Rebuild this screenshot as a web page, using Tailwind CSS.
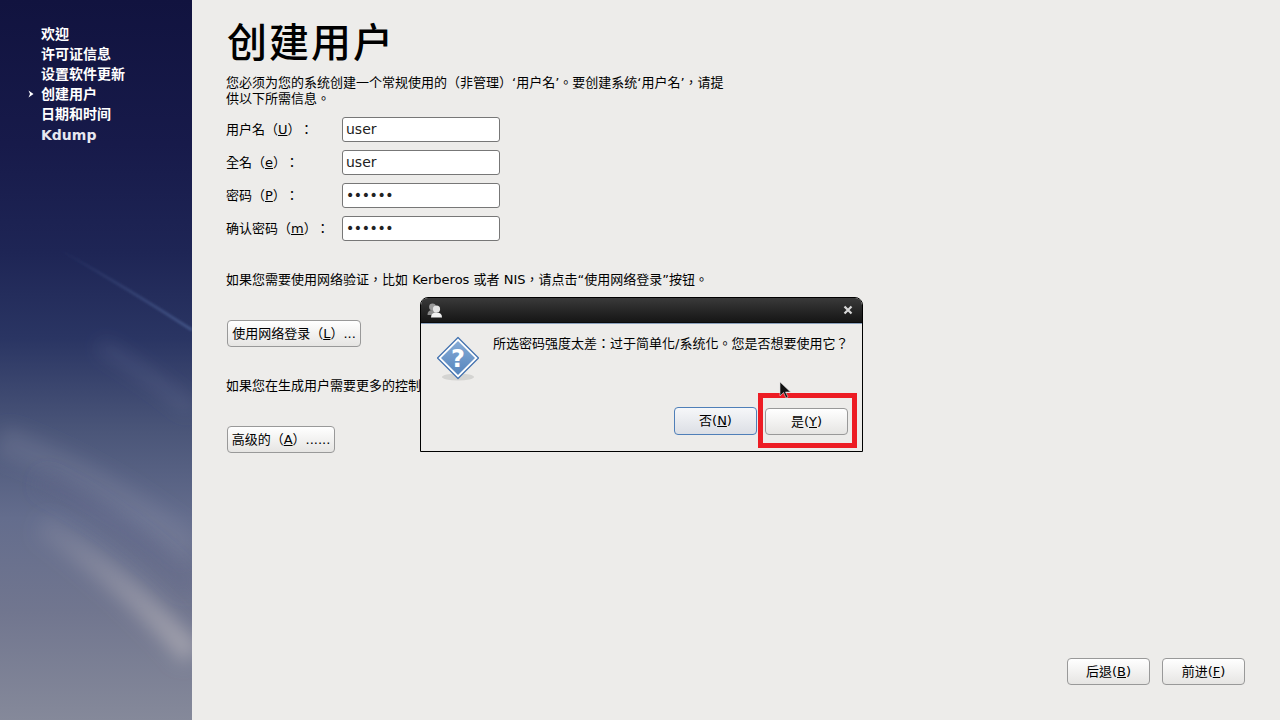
<!DOCTYPE html>
<html lang="zh-TW">
<head>
    <meta charset="UTF-8">
    <title>创建用户</title>
    <script src="https://cdn.jsdelivr.net/npm/@tailwindcss/browser@4"></script>
</head>
<body class="w-[1280px] h-[720px] overflow-hidden bg-[#edecea] text-black text-[13px] leading-[16px] font-['DejaVu_Sans','Noto_Sans_CJK_TC',sans-serif]">
<div class="relative flex h-[720px]">

    <!-- sidebar -->
    <aside class="relative w-[192px] shrink-0 overflow-hidden bg-[linear-gradient(180deg,#11133f_0%,#171a4a_20%,#1e2555_35%,#2a3563_47%,#4b5679_60%,#646d8d_72%,#71768f_85%,#85899a_100%)]">
        <svg class="absolute inset-0" width="192" height="720" viewBox="0 0 192 720" fill="none">
            <defs>
                <filter id="soft" x="-30%" y="-30%" width="160%" height="160%"><feGaussianBlur stdDeviation="9"/></filter>
                <filter id="thin" x="-30%" y="-30%" width="160%" height="160%"><feGaussianBlur stdDeviation="1"/></filter>
                <linearGradient id="fade" gradientUnits="userSpaceOnUse" x1="60" y1="0" x2="192" y2="0"><stop offset="0" stop-color="#5a72a8" stop-opacity="0"/><stop offset="1" stop-color="#5a72a8" stop-opacity=".5"/></linearGradient>
                <linearGradient id="glow" gradientUnits="userSpaceOnUse" x1="30" y1="0" x2="192" y2="0"><stop offset="0" stop-color="#a8a6b2" stop-opacity=".1"/><stop offset="1" stop-color="#b0aeb6" stop-opacity=".75"/></linearGradient>
            </defs>
            <path d="M60 250 Q130 290 192 330" stroke="url(#fade)" stroke-width="3" filter="url(#thin)"/>
            <path d="M100 345 Q150 375 192 410" stroke="#8088a8" stroke-opacity=".2" stroke-width="14" filter="url(#soft)"/>
            <path d="M0 440 Q110 480 192 550" stroke="#8a8ea8" stroke-opacity=".25" stroke-width="30" filter="url(#soft)"/>
            <path d="M40 480 Q120 520 192 590" stroke="#5f6486" stroke-opacity=".35" stroke-width="20" filter="url(#soft)"/>
            <path d="M40 525 Q120 575 192 655" stroke="url(#glow)" stroke-width="24" filter="url(#soft)"/>
        </svg>
        <nav class="relative pt-[24px] pl-[41px] text-white text-[14px] font-bold">
            <div class="h-[20px] leading-[20px]">欢迎</div>
            <div class="h-[20px] leading-[20px]">许可证信息</div>
            <div class="h-[20px] leading-[20px]">设置软件更新</div>
            <div class="relative h-[20px] leading-[20px]">
                <svg class="absolute left-[-13px] top-[6px]" width="6" height="8" viewBox="0 0 6 8"><path d="M0.5 0.5 L5.5 4 L0.5 7.5 L2 4 Z" fill="#fff"/></svg>
                创建用户
            </div>
            <div class="h-[20px] leading-[20px]">日期和时间</div>
            <div class="h-[21px] leading-[23px] text-[#e8e8f0]">Kdump</div>
        </nav>
    </aside>

    <!-- main -->
    <main class="flex-1 flex flex-col pl-[34px] pr-[35px]">
        <h1 class="mt-[20px] ml-[1px] h-[46px] text-[40px] leading-[46px] tracking-[2px] font-medium">创建用户</h1>
        <p class="mt-[9px] w-[510px]">您必须为您的系统创建一个常规使用的（非管理）‘用户名’。要创建系统‘用户名’，请提<br>供以下所需信息。</p>

        <div class="mt-[10px] flex flex-col gap-[8px]">
            <div class="flex items-center h-[25px]">
                <label class="w-[116px]">用户名（<u>U</u>）<span class="ml-[6px]">：</span></label>
                <div class="w-[158px] h-[25px] px-[3px] bg-white border border-[#777] rounded-[3px] text-[14px] leading-[23px] text-[#222]">user</div>
            </div>
            <div class="flex items-center h-[25px]">
                <label class="w-[116px]">全名（<u>e</u>）<span class="ml-[6px]">：</span></label>
                <div class="w-[158px] h-[25px] px-[3px] bg-white border border-[#777] rounded-[3px] text-[14px] leading-[23px] text-[#222]">user</div>
            </div>
            <div class="flex items-center h-[25px]">
                <label class="w-[116px]">密码（<u>P</u>）<span class="ml-[6px]">：</span></label>
                <div class="w-[158px] h-[25px] px-[3px] bg-white border border-[#777] rounded-[3px] text-[14px] leading-[23px] tracking-[-0.4px] text-[#222]">••••••</div>
            </div>
            <div class="flex items-center h-[25px]">
                <label class="w-[116px]">确认密码（<u>m</u>）<span class="ml-[6px]">：</span></label>
                <div class="w-[158px] h-[25px] px-[3px] bg-white border border-[#777] rounded-[3px] text-[14px] leading-[23px] tracking-[-0.4px] text-[#222]">••••••</div>
            </div>
        </div>

        <p class="mt-[31px]">如果您需要使用网络验证，比如 Kerberos 或者 NIS，请点击“使用网络登录”按钮。</p>
        <button class="mt-[32px] ml-[1px] w-[134px] h-[27px] text-center bg-gradient-to-b from-white to-[#e6e5e3] border border-[#999] rounded-[4px] whitespace-nowrap">使用网络登录（<u>L</u>）...</button>
        <p class="mt-[31px]">如果您在生成用户需要更多的控制，请点击“高级的”按钮。</p>
        <button class="mt-[32px] ml-[1px] w-[108px] h-[27px] text-center bg-gradient-to-b from-white to-[#e6e5e3] border border-[#999] rounded-[4px] whitespace-nowrap">高级的（<u>A</u>）......</button>

        <div class="mt-auto mb-[35px] flex justify-end gap-[12px]">
            <button class="w-[83px] h-[27px] bg-gradient-to-b from-white to-[#e6e5e3] border border-[#999] rounded-[4px]">后退(<u>B</u>)</button>
            <button class="w-[83px] h-[27px] bg-gradient-to-b from-white to-[#e6e5e3] border border-[#999] rounded-[4px]">前进(<u>F</u>)</button>
        </div>
    </main>

    <!-- dialog -->
    <div class="absolute left-[420px] top-[297px] w-[443px] h-[155px] flex flex-col bg-[#edecea] border border-black rounded-t-[8px] overflow-hidden">
        <div class="h-[25px] shrink-0 flex items-center justify-between pl-[6px] pr-[9px] bg-gradient-to-b from-[#3a3a3a] to-[#161616] border-b border-[#0a0a0a] shadow-[0_1px_0_#8aa0bc]">
            <svg width="16" height="16" viewBox="0 0 16 16">
                <circle cx="5.5" cy="5" r="3.4" fill="#9a9a9a"/>
                <path d="M0.5 13 Q0.5 8 5.5 8 Q10 8 10 13 Z" fill="#8c8c8c"/>
                <circle cx="9.5" cy="7" r="3.6" fill="#e4e4e4"/>
                <path d="M4 15.5 Q4 10.5 9.5 10.5 Q15 10.5 15 15.5 Z" fill="#f2f2f2"/>
            </svg>
            <svg width="10" height="10" viewBox="0 0 10 10"><path d="M1.5 1.5 L8.5 8.5 M8.5 1.5 L1.5 8.5" stroke="#d8d8d8" stroke-width="2.2"/></svg>
        </div>
        <div class="relative flex-1">
            <svg class="absolute left-[14px] top-[13px]" width="46" height="48" viewBox="0 0 46 48">
                <defs>
                    <linearGradient id="dia" x1="0" y1="0" x2="0" y2="1"><stop offset="0" stop-color="#86abd6"/><stop offset="1" stop-color="#5685bd"/></linearGradient>
                </defs>
                <ellipse cx="23" cy="41" rx="16" ry="3.5" fill="#000" fill-opacity=".1"/>
                <path d="M23 1.5 L43.5 22 L23 42.5 L2.5 22 Z" fill="#fff" stroke="#3f6fae" stroke-width="1.2" stroke-linejoin="round"/>
                <path d="M23 5 L40 22 L23 39 L6 22 Z" fill="url(#dia)"/>
                <text x="23" y="31" text-anchor="middle" font-family="DejaVu Sans" font-weight="bold" font-size="24" fill="#fff">?</text>
            </svg>
            <p class="absolute left-[72px] top-[13px] whitespace-nowrap">所选密码强度太差：过于简单化/系统化。您是否想要使用它？</p>
            <button class="absolute left-[253px] top-[84px] w-[83px] h-[28px] bg-gradient-to-b from-[#f6f7f9] to-[#dcdfe5] border border-[#4f7fb8] rounded-[4px]">否(<u>N</u>)</button>
            <button class="absolute left-[344px] top-[85px] w-[83px] h-[27px] bg-gradient-to-b from-white to-[#e6e5e3] border border-[#999] rounded-[4px]">是(<u>Y</u>)</button>
        </div>
    </div>

    <!-- red annotation box -->
    <div class="absolute left-[758px] top-[393px] w-[99px] h-[55px] border-[5px] border-[#ed1c24]"></div>

    <!-- mouse pointer -->
    <svg class="absolute left-[779px] top-[381px]" width="13" height="19" viewBox="0 0 13 19">
        <path d="M1 1 L1 15 L4.5 11.5 L7 17 L9 16 L6.5 11 L11.5 11 Z" fill="#111" stroke="#ddd" stroke-width=".6"/>
    </svg>
</div>
</body>
</html>
